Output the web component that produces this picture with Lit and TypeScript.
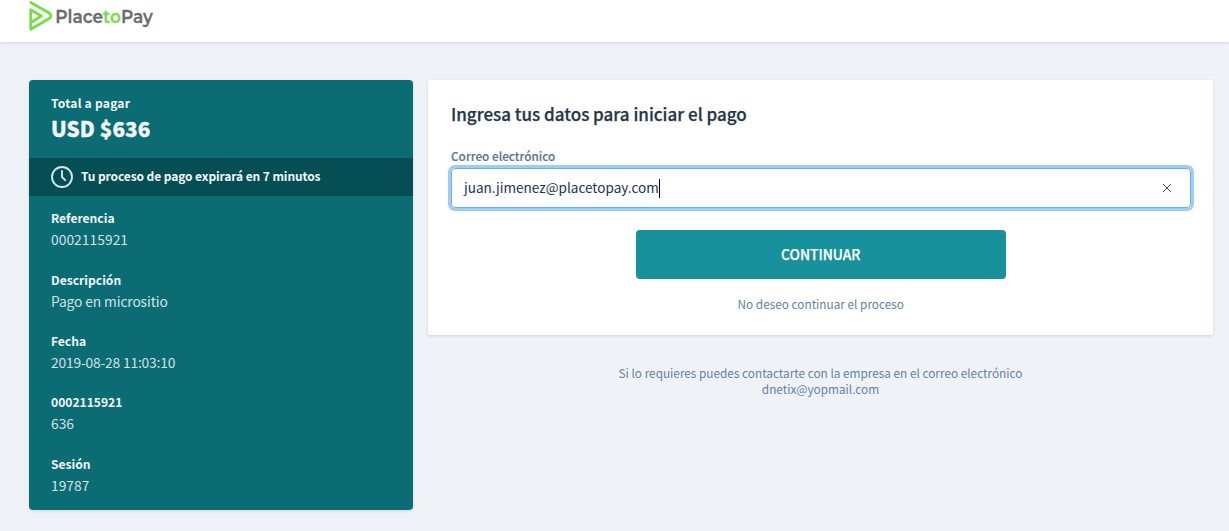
import { LitElement, html, css } from "lit";
import { customElement, property } from "lit/decorators.js";
import { styleMap } from "lit/directives/style-map.js";

@customElement("brand-logo")
class BrandLogo extends LitElement {
  static styles = css`
    :host { display: block; height: 32px; }
    svg { display: block; }
    .word { font: 600 17.4px Montserrat, Inter, "Open Sans", sans-serif; fill: #6d6d70; stroke: #6d6d70; stroke-width: .3px; }
    .to { fill: #79dd4b; stroke: #79dd4b; }
  `;
  render() {
    return html`<svg width="126" height="32" viewBox="0 0 126 32" role="img" aria-label="PlacetoPay">
      <g fill="none" stroke="#79dd4b" stroke-width="2.9" stroke-linecap="round" stroke-linejoin="round">
        <path d="M1.8 2.6 L20.6 13.3 Q23.4 15.8 20.6 18.2 L1.8 29.3 V9.8 L12.4 15.9 L2 22.4" />
      </g>
      <text class="word" x="26.3" y="23" textLength="97.5" lengthAdjust="spacingAndGlyphs">Place<tspan class="to">to</tspan>Pay</text>
    </svg>`;
  }
}

@customElement("detail-item")
class DetailItem extends LitElement {
  @property() label = "";
  @property() value = "";
  @property({ type: Number }) tracking = 0;
  static styles = css`
    :host { display: block; height: 61.4px; }
    .label { font-size: 12.1px; font-weight: 700; line-height: 18px; color: #f1f6f8; }
    .value { font-size: 13.8px; line-height: 22px; margin-top: 1px; color: #d3e2e8; }
  `;
  render() {
    return html`<div class="label">${this.label}</div>
      <div class="value" style=${styleMap({ letterSpacing: `${this.tracking}px` })}>${this.value}</div>`;
  }
}

@customElement("app-root")
class AppRoot extends LitElement {
  private details: [string, string, number][] = [
    ["Referencia", "0002115921", 0.05],
    ["Descripción", "Pago en micrositio", -0.12],
    ["Fecha", "2019-08-28 11:03:10", -0.18],
    ["0002115921", "636", 0],
    ["Sesión", "19787", 0],
  ];

  static styles = css`
    :host {
      display: block; height: 531px; overflow: hidden; background: #eff3f8;
      font-family: "Source Sans Pro", "Noto Sans CJK SC", "Noto Sans", sans-serif;
    }
    * { box-sizing: border-box; }
    .header { height: 42px; padding-left: 29px; background: #fff; box-shadow: 0 1px 3px rgba(0,0,0,.12); }
    .main { display: grid; grid-template-columns: 384px 785px; column-gap: 15px; padding: 38px 0 0 29px; align-items: start; }
    .summary { height: 430px; border-radius: 4px; overflow: hidden; background: #0b6c74; color: #f1f6f8; box-shadow: 0 1px 3px rgba(0,0,0,.12); }
    .total { height: 78px; padding: 14px 22px 0; }
    .total-label { font-size: 12.1px; font-weight: 700; line-height: 18px; letter-spacing: .22px; }
    .amount { font-size: 20.6px; font-weight: 900; line-height: 32px; letter-spacing: .1px; -webkit-text-stroke: .35px currentColor; }
    .expiry { display: flex; align-items: center; gap: 8px; height: 38px; padding-left: 22px; background: #054e54; font-size: 12px; font-weight: 700; letter-spacing: -.1px; }
    .expiry svg { display: block; }
    .expiry-text { padding-bottom: 3px; }
    .details { padding: 13.2px 22px 0; }
    .card { height: 255px; padding: 21px 22.5px 0 23px; background: #fff; border-radius: 2px; box-shadow: 0 1px 3px rgba(0,0,0,.15); }
    .title { font-size: 17px; font-weight: 500; line-height: 26px; color: #22364c; -webkit-text-stroke: .25px currentColor; }
    .field-label { margin-top: 20px; font-size: 11.8px; font-weight: 500; line-height: 18px; color: #587592; -webkit-text-stroke: .15px currentColor; }
    .input { display: flex; align-items: center; height: 40px; margin-top: 3px; padding: 0 18px 0 12px; border: 1px solid #63b3ed; border-radius: 4px; box-shadow: 0 0 0 3px #a0cdf2; font-size: 13.55px; color: #22364c; }
    .email { padding-bottom: 2px; }
    .caret { width: 1px; height: 19px; background: #000; }
    .clear { margin-left: auto; }
    .button { display: flex; align-items: center; justify-content: center; width: 370px; height: 49px; margin: 22px auto 0; padding-bottom: 1px; border-radius: 4px; background: #17919b; color: #fff; font-size: 13.8px; font-weight: 500; -webkit-text-stroke: .25px currentColor; }
    .cancel { margin-top: 16px; text-align: center; font-size: 11.8px; line-height: 18px; color: #6482a0; }
    .contact { margin-top: 30px; text-align: center; font-size: 11.8px; line-height: 16px; color: #6482a0; }
  `;

  render() {
    return html`
      <header class="header"><brand-logo></brand-logo></header>
      <main class="main">
        <aside class="summary">
          <div class="total">
            <div class="total-label">Total a pagar</div>
            <div class="amount">USD $636</div>
          </div>
          <div class="expiry">
            <svg width="22" height="22" viewBox="0 0 22 22" fill="none" stroke="#d5e5ec" stroke-width="1.9" stroke-linecap="round" stroke-linejoin="round">
              <circle cx="11" cy="11" r="10" /><path d="M11 5v6l3.2 3.2" />
            </svg>
            <span class="expiry-text">Tu proceso de pago expirará en 7 minutos</span>
          </div>
          <div class="details">
            ${this.details.map(([l, v, t]) => html`<detail-item .label=${l} .value=${v} .tracking=${t}></detail-item>`)}
          </div>
        </aside>
        <section>
          <div class="card">
            <div class="title">Ingresa tus datos para iniciar el pago</div>
            <div class="field-label">Correo electrónico</div>
            <div class="input">
              <span class="email">juan.jimenez@placetopay.com</span><span class="caret"></span>
              <svg class="clear" width="10" height="10" viewBox="0 0 10 10" stroke="#4d4b45" stroke-width="1"><path d="M1 1l8 8M9 1l-8 8" /></svg>
            </div>
            <div class="button">CONTINUAR</div>
            <div class="cancel">No deseo continuar el proceso</div>
          </div>
          <div class="contact">Si lo requieres puedes contactarte con la empresa en el correo electrónico<br />dnetix@yopmail.com</div>
        </section>
      </main>`;
  }
}
